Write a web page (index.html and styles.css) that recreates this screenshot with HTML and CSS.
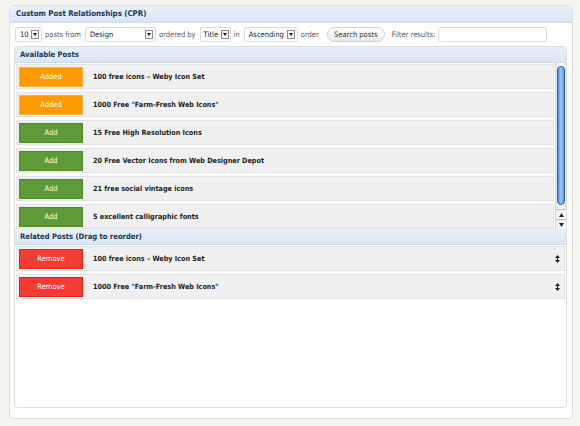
FILE: index.html
```html
<!DOCTYPE html>
<html>
<head>
<meta charset="utf-8">
<link rel="stylesheet" href="styles.css">
</head>
<body>
<div class="panel">
  <div class="panel-head">Custom Post Relationships (CPR)</div>
  <div class="controls">
    <span class="select w10"><span class="val">10</span><span class="arrow"></span></span>
    <span class="lbl">posts from</span>
    <span class="select wdesign"><span class="val">Design</span><span class="arrow"></span></span>
    <span class="lbl">ordered by</span>
    <span class="select wtitle"><span class="val">Title</span><span class="arrow"></span></span>
    <span class="lbl">in</span>
    <span class="select wasc"><span class="val">Ascending</span><span class="arrow"></span></span>
    <span class="lbl">order</span>
    <span class="btn-search">Search posts</span>
    <span class="lbl filter">Filter results:</span>
    <span class="input"></span>
  </div>
  <div class="inner">
    <div class="sub-head first">Available Posts</div>
    <div class="avail">
      <div class="list">
        <div class="row"><span class="btn added">Added</span><span class="title">100 free icons – Weby Icon Set</span></div>
        <div class="row"><span class="btn added">Added</span><span class="title">1000 Free "Farm-Fresh Web Icons"</span></div>
        <div class="row"><span class="btn add">Add</span><span class="title">15 Free High Resolution Icons</span></div>
        <div class="row"><span class="btn add">Add</span><span class="title">20 Free Vector Icons from Web Designer Depot</span></div>
        <div class="row"><span class="btn add">Add</span><span class="title">21 free social vintage icons</span></div>
        <div class="row"><span class="btn add">Add</span><span class="title">5 excellent calligraphic fonts</span></div>
      </div>
      <div class="scrollbar">
        <div class="track"><div class="thumb"></div></div>
        <div class="sb-btn"><svg width="5" height="4" viewBox="0 0 5 4"><polygon points="2.5,0 5,4 0,4" fill="#222"/></svg></div>
        <div class="sb-btn"><svg width="5" height="4" viewBox="0 0 5 4"><polygon points="0,0 5,0 2.5,4" fill="#222"/></svg></div>
      </div>
    </div>
    <div class="sub-head">Related Posts (Drag to reorder)</div>
    <div class="related">
      <div class="row"><span class="btn remove">Remove</span><span class="title">100 free icons – Weby Icon Set</span><svg class="sort" width="5" height="8" viewBox="0 0 5 8"><polygon points="2.5,0 5,3 0,3" fill="#222"/><rect x="2" y="3" width="1" height="2" fill="#222"/><polygon points="0,5 5,5 2.5,8" fill="#222"/></svg></div>
      <div class="row"><span class="btn remove">Remove</span><span class="title">1000 Free "Farm-Fresh Web Icons"</span><svg class="sort" width="5" height="8" viewBox="0 0 5 8"><polygon points="2.5,0 5,3 0,3" fill="#222"/><rect x="2" y="3" width="1" height="2" fill="#222"/><polygon points="0,5 5,5 2.5,8" fill="#222"/></svg></div>
    </div>
  </div>
</div>
</body>
</html>
```
FILE: styles.css
```css
* { box-sizing: border-box; }
body {
  margin: 0;
  background: #f5f4ef;
  font-family: "DejaVu Sans Condensed", "DejaVu Sans", sans-serif;
  font-size: 7.5px;
  color: #222;
}
.panel {
  margin: 5px 0 0 9px;
  width: 564px;
  height: 414px;
  background: #fff;
  border: 1px solid #dfdfdf;
  border-radius: 4px;
}
.panel-head {
  height: 17px;
  background: linear-gradient(#e9f1fa, #d8e6f4);
  border-radius: 3px 3px 0 0;
  border-bottom: 1px solid #d0dde9;
  padding-left: 6px;
  line-height: 16px;
  font-weight: bold;
  font-size: 7.8px;
  color: #1b3654;
}
.controls {
  display: flex;
  align-items: center;
  height: 15px;
  margin: 4px 0 0 5px;
}
.lbl { color: #555; margin-right: 4px; white-space: nowrap; }
.select {
  display: flex;
  flex: none;
  align-items: center;
  justify-content: space-between;
  height: 15px;
  border: 1px solid #dcdcdc;
  border-radius: 2px;
  padding: 0 2px 0 4px;
  margin-right: 3px;
  color: #222;
}
.w10 { width: 27px; }
.wdesign { width: 71px; }
.wtitle { width: 31px; padding-left: 3px; padding-right: 1px; }
.wasc { width: 54px; }
.arrow {
  flex: none;
  width: 8px;
  height: 9px;
  border: 1px solid #8d8d8d;
  background: #fff;
  position: relative;
}
.arrow::after {
  content: "";
  position: absolute;
  left: 1px;
  top: 2px;
  border-left: 2.5px solid transparent;
  border-right: 2.5px solid transparent;
  border-top: 3px solid #111;
}
.btn-search {
  flex: none;
  height: 15px;
  width: 58px;
  margin: 0 7px 0 4px;
  border: 1px solid #cfcfcf;
  border-radius: 8px;
  background: linear-gradient(#fff, #ececec);
  text-align: center;
  line-height: 13px;
  color: #333;
}
.filter { margin-right: 3px; }
.input {
  flex: none;
  width: 109px;
  height: 15px;
  border: 1px solid #dcdcdc;
  border-radius: 3px;
}
.inner {
  margin: 4px 0 0 4px;
  width: 553px;
  height: 362px;
  border: 1px solid #dcdcdc;
  border-radius: 4px;
}
.sub-head {
  height: 16px;
  background: linear-gradient(#e8f0f9, #d9e7f5);
  border-bottom: 1px solid #ccdbea;
  padding-left: 5px;
  line-height: 15px;
  font-weight: bold;
  font-size: 7.6px;
  color: #1b3654;
}
.sub-head.first { border-radius: 3px 3px 0 0; }
.avail {
  display: flex;
  height: 166px;
}
.list {
  width: 541px;
  padding: 1px 1px 0 1px;
  display: flex;
  flex-direction: column;
  gap: 3px;
  overflow: hidden;
}
.row {
  display: flex;
  align-items: center;
  height: 25px;
  flex: none;
  background: #f0f0f0;
  border: 1px solid #e4e4e4;
  padding-left: 2px;
}
.btn {
  flex: none;
  width: 64px;
  height: 20px;
  line-height: 18px;
  text-align: center;
  color: #fff;
  border: 1px solid;
  margin-right: 10px;
}
.added { background: #ff9a00; border-color: #f5b04a; }
.add { background: #5f9a39; border-color: #4c8a26; }
.remove { background: #f43c34; border-color: #e8231a; }
.title { font-weight: bold; color: #1d1d1d; font-size: 7.2px; }
.scrollbar {
  width: 11px;
  border-left: 1px solid #d6d6d6;
  display: flex;
  flex-direction: column;
  background: #fff;
}
.track {
  flex: 1;
  padding: 3px 1px 1px 1px;
  background: linear-gradient(90deg, #e6e6e6, #fff 50%, #e6e6e6);
}
.thumb {
  height: 139px;
  border-radius: 5px;
  border: 1px solid #2f5f9f;
  background: linear-gradient(90deg, #4d8ad6, #9cc8f4 45%, #5d9be2);
}
.sb-btn {
  height: 10px;
  border-top: 1px solid #bbb;
  display: flex;
  align-items: center;
  justify-content: center;
  background: linear-gradient(90deg, #eee, #fff);
}
.related {
  display: flex;
  flex-direction: column;
  gap: 3px;
  padding: 1px 1px 0 1px;
}
.related .row { width: 549px; }
.sort { margin-left: auto; margin-right: 4px; }
```
